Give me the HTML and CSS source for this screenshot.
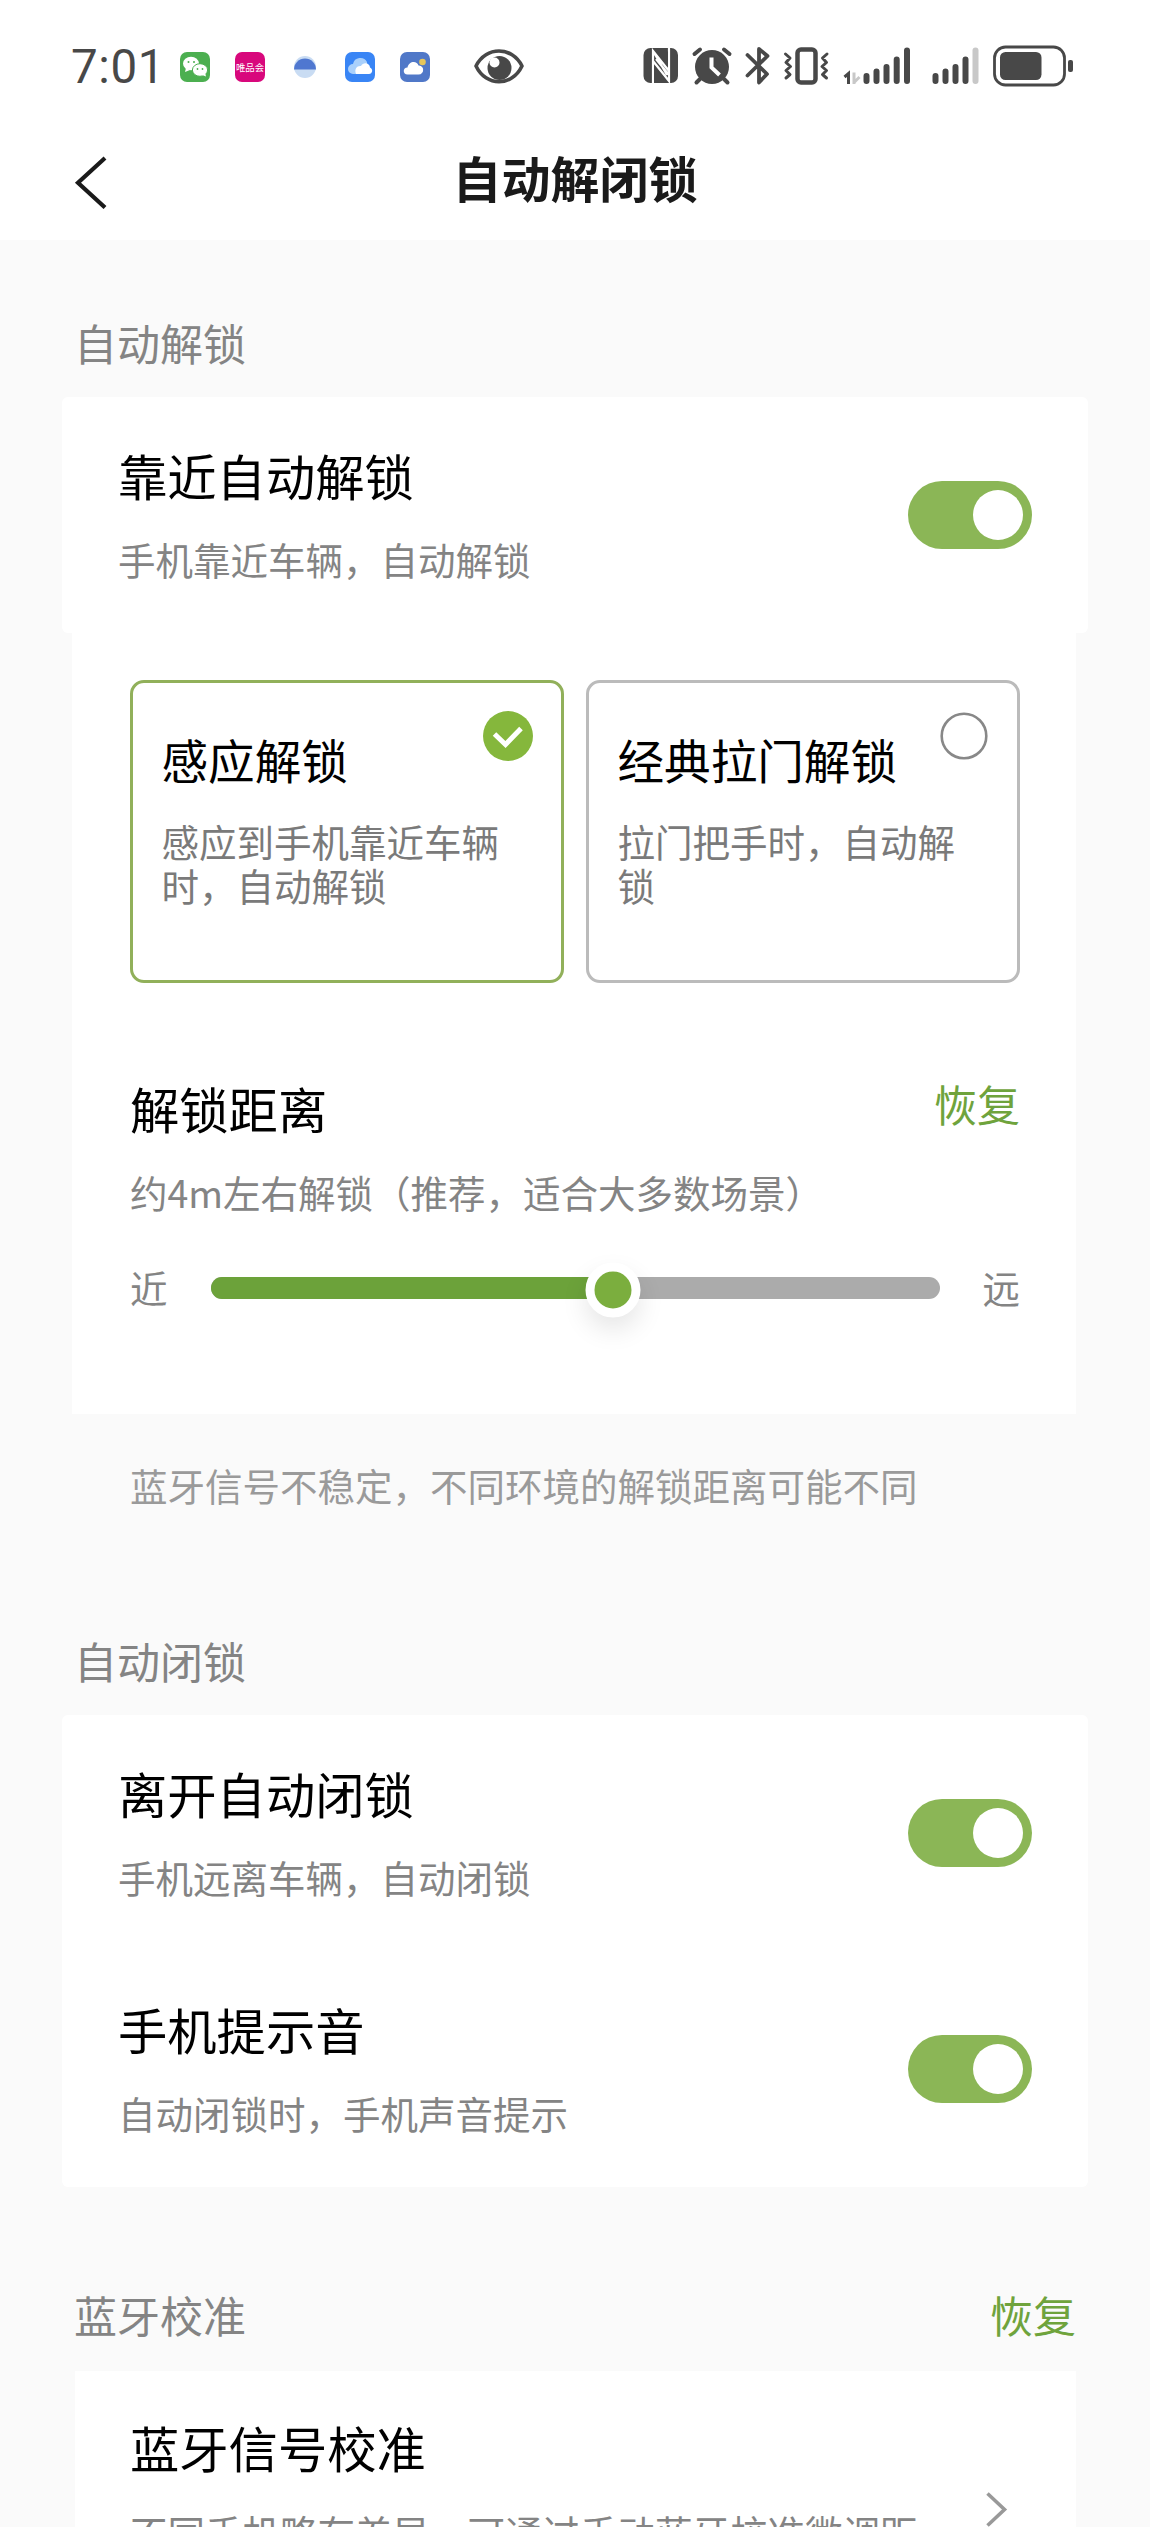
FILE: index.html
```html
<!DOCTYPE html>
<html lang="zh-CN">
<head>
<meta charset="utf-8">
<title>自动解闭锁</title>
<link rel="stylesheet" href="styles.css">
</head>
<body>
<div class="screen">
  <header class="top">
    <div class="status">
      <div class="status-group">
        <span class="clock">7:01</span>
        <svg width="51" height="44" viewBox="172 44 51 44">
          <rect x="180" y="52" width="30" height="30" rx="7" fill="#4caf50"/>
          <ellipse cx="191" cy="63.500" rx="8" ry="6.800" fill="#fff"/>
          <path d="M186 68l-1 4 5-2z" fill="#fff"/>
          <ellipse cx="200" cy="70" rx="7.600" ry="6.300" fill="#fff" stroke="#4caf50" stroke-width="1"/>
          <path d="M202 75l4 1.500-1-4z" fill="#fff"/>
          <g fill="#4caf50"><circle cx="188.500" cy="62" r="1"/><circle cx="194" cy="62" r="1"/><circle cx="197.500" cy="69" r=".9"/><circle cx="202.500" cy="69" r=".9"/></g>
        </svg>
        <svg width="55" height="44" viewBox="223 44 55 44">
          <rect x="235" y="52" width="30" height="30" rx="7" fill="#d8087c"/>
          <text x="250" y="70.500" text-anchor="middle" class="vip">唯品会</text>
        </svg>
        <svg width="55" height="44" viewBox="278 44 55 44">
          <circle cx="305" cy="67" r="11" fill="#c9dcf3"/>
          <path d="M294 69.500a11 11 0 1 1 22 0z" fill="#4f77d0"/>
        </svg>
        <svg width="55" height="44" viewBox="333 44 55 44">
          <rect x="345" y="52" width="30" height="30" rx="7" fill="#3985f5"/>
          <path d="M353 74a5 5 0 0 1 0-10 7.500 7.500 0 0 1 14-2v12z" fill="#a9d0fb"/>
          <path d="M356 74c-2-5 1-8.500 5-8 2-4.500 9-3.500 9 1.500 3.500 1.500 2.500 6.500-1 6.500z" fill="#fff"/>
        </svg>
        <svg width="55" height="44" viewBox="388 44 55 44">
          <rect x="400" y="52" width="30" height="30" rx="7" fill="#5078c8"/>
          <circle cx="422.500" cy="62" r="3.300" fill="#e6c65b"/>
          <path d="M407.500 74.500c-5 0-5-7 0-7 1-6.500 9.500-7.500 11-2 6-.5 6.500 9 0 9z" fill="#fff"/>
        </svg>
        <svg width="90" height="44" viewBox="443 44 90 44">
          <path d="M476 66C486 46 512 46 522 66 512 87 486 87 476 66z" fill="none" stroke="#484848" stroke-width="3.600" stroke-linejoin="round"/>
          <circle cx="499.500" cy="68" r="12" fill="#484848"/>
          <circle cx="494.500" cy="62.500" r="5" fill="#fff"/>
        </svg>
      </div>
      <div class="status-group">
        <svg width="50" height="44" viewBox="636 44 50 44">
          <rect x="643.500" y="48" width="34.500" height="35" rx="7" fill="#484848"/>
          <path d="M653 84V51L669 71M669 48v33L653 61M656 59l13 16M653 51l14 24" fill="none" stroke="#fff" stroke-width="2.200"/>
          <path d="M656 49h9l3 3v15L656 52zM654 65l12 15v3h-12z" fill="#484848"/>
        </svg>
        <svg width="52" height="44" viewBox="686 44 52 44">
          <circle cx="712" cy="67" r="17" fill="#484848"/>
          <path d="M694.500 54l5.500-4.500M729.500 54l-5.500-4.500M700 79l-3.500 3.500M724 79l3.500 3.500" stroke="#484848" stroke-width="4" stroke-linecap="round"/>
          <path d="M711.500 57.500v10l8 7.500" fill="none" stroke="#fff" stroke-width="4"/>
        </svg>
        <svg width="40" height="44" viewBox="738 44 40 44">
          <path d="M747.500 55l19.500 19-8 8.500V49l8.500 7-20 19.500" fill="none" stroke="#484848" stroke-width="3.800" stroke-linecap="round" stroke-linejoin="round"/>
        </svg>
        <svg width="58" height="44" viewBox="778 44 58 44">
          <rect x="797.500" y="49.500" width="18" height="33" rx="3.500" fill="none" stroke="#484848" stroke-width="4.500"/>
          <path d="M785.500 54l4.500 4-4 4.500 4.500 4-4.500 4 4 4-4 3.500M827 54l-4.500 4 4 4.500-4.500 4 4.500 4-4 4 4 3.500" fill="none" stroke="#484848" stroke-width="3" stroke-linecap="round" stroke-linejoin="round"/>
        </svg>
        <svg width="84" height="44" viewBox="836 44 84 44">
          <path d="M844.500 77l4-3.500V84" fill="none" stroke="#484848" stroke-width="3"/>
          <path d="M854 72.500v11.500M854.500 82l5-5" fill="none" stroke="#c8c8c8" stroke-width="3"/>
          <path d="M866.500 76v5M876.500 71.500v9.500M886.500 67v14M896.700 59.500v21.500M907 50.500v30.500" stroke="#484848" stroke-width="6" stroke-linecap="round"/>
        </svg>
        <svg width="66" height="44" viewBox="920 44 66 44">
          <path d="M935.500 76v5M945.500 71.500v9.500M955.500 67v14M965.500 59.500v21.500" stroke="#484848" stroke-width="6" stroke-linecap="round"/>
          <path d="M975.500 50.500v30.500" stroke="#c8c8c8" stroke-width="6" stroke-linecap="round"/>
        </svg>
        <svg width="90" height="44" viewBox="986 44 90 44">
          <rect x="994.500" y="47" width="70" height="38" rx="11" fill="none" stroke="#484848" stroke-width="2.800"/>
          <rect x="1000" y="52" width="41.500" height="28" rx="5.500" fill="#484848"/>
          <rect x="1068" y="60" width="5" height="12" rx="2" fill="#484848"/>
        </svg>
      </div>
    </div>
    <nav class="nav">
      <svg class="back" width="48" height="64" viewBox="68 144.5 48 64">
        <path d="M105 157.500L78 182.300 105 207" transform="translate(0 0)" fill="none" stroke="#1a1a1a" stroke-width="4.200"/>
      </svg>
      <h1 class="title">自动解闭锁</h1>
    </nav>
  </header>

  <main class="content">
    <h2 class="label">自动解锁</h2>
    <section class="card">
      <div class="row">
        <div class="row-text">
          <div class="name">靠近自动解锁</div>
          <div class="desc">手机靠近车辆，自动解锁</div>
        </div>
        <div class="toggle"><div class="knob"></div></div>
      </div>
    </section>

    <section class="panel">
      <div class="options">
        <div class="option selected">
          <div class="option-name">感应解锁</div>
          <div class="option-desc">感应到手机靠近车辆时，自动解锁</div>
          <svg class="radio" width="50" height="50" viewBox="0 0 50 50">
            <circle cx="25" cy="25" r="25" fill="#85b73c"/>
            <path d="M11.500 23L22.500 33.500 38 17.500" fill="none" stroke="#fff" stroke-width="5"/>
          </svg>
        </div>
        <div class="option">
          <div class="option-name">经典拉门解锁</div>
          <div class="option-desc">拉门把手时，自动解锁</div>
          <svg class="radio" width="50" height="50" viewBox="0 0 50 50">
            <circle cx="25" cy="25" r="22.300" fill="none" stroke="#888" stroke-width="2.600"/>
          </svg>
        </div>
      </div>
      <div class="distance-head">
        <div class="name">解锁距离</div>
        <div class="reset">恢复</div>
      </div>
      <div class="desc distance-desc">约4m左右解锁（推荐，适合大多数场景）</div>
      <div class="slider">
        <span class="slider-end">近</span>
        <div class="track">
          <div class="fill" style="width:55.2%"></div>
          <div class="thumb" style="left:55.2%"></div>
        </div>
        <span class="slider-end">远</span>
      </div>
    </section>
    <p class="note">蓝牙信号不稳定，不同环境的解锁距离可能不同</p>

    <h2 class="label">自动闭锁</h2>
    <section class="card">
      <div class="row">
        <div class="row-text">
          <div class="name">离开自动闭锁</div>
          <div class="desc">手机远离车辆，自动闭锁</div>
        </div>
        <div class="toggle"><div class="knob"></div></div>
      </div>
      <div class="row">
        <div class="row-text">
          <div class="name">手机提示音</div>
          <div class="desc">自动闭锁时，手机声音提示</div>
        </div>
        <div class="toggle"><div class="knob"></div></div>
      </div>
    </section>

    <div class="calibrate-head">
      <h2 class="label">蓝牙校准</h2>
      <div class="reset">恢复</div>
    </div>
    <section class="calibrate">
      <div class="row-text">
        <div class="name">蓝牙信号校准</div>
        <div class="desc">不同手机略有差异，可通过手动蓝牙校准微调距</div>
      </div>
      <svg class="chevron" width="24" height="38" viewBox="984 2490 24 38">
        <path d="M987.500 2493.500L1004.500 2509.500 987.500 2525.500" fill="none" stroke="#999" stroke-width="3.600"/>
      </svg>
    </section>
  </main>
</div>
</body>
</html>
```

FILE: styles.css
```css
* {
  box-sizing: border-box;
  margin: 0;
  padding: 0;
}

body {
  background: #fafafa;
  font-family: "Noto Sans CJK SC", sans-serif;
  color: #000;
}

svg {
  display: block;
  flex: none;
}

.screen {
  width: 1150px;
  height: 2527px;
  overflow: hidden;
  display: flex;
  flex-direction: column;
}

.top {
  flex: none;
  height: 240px;
  padding-top: 44px;
  background: #fff;
}

.status {
  display: flex;
  justify-content: space-between;
  height: 44px;
  padding: 0 74px 0 71px;
}

.status-group {
  display: flex;
}

.clock {
  width: 101px;
  font-family: Roboto, sans-serif;
  font-size: 47.5px;
  line-height: 46px;
  letter-spacing: 0.6px;
  color: #484848;
}

.vip {
  font-size: 9.4px;
  fill: #fff;
}

.nav {
  display: grid;
  grid-template-columns: 68px 1fr 68px;
  align-items: center;
  height: 152px;
  padding-top: 25px;
}

.back {
  grid-column: 1;
  margin-left: 68px;
}

.title {
  grid-column: 2;
  text-align: center;
  font-size: 49px;
  line-height: 60px;
  font-weight: 700;
  color: #1a1a1a;
}

.content {
  flex: 1;
  min-height: 0;
  padding: 72px 62px 0;
}

.label {
  padding-left: 12px;
  font-size: 43px;
  line-height: 60px;
  font-weight: 400;
  color: #848484;
}

.card {
  margin-top: 25px;
  background: #fff;
  border-radius: 6px;
}

.row {
  display: flex;
  align-items: center;
  justify-content: space-between;
  height: 236px;
  padding: 0 56px;
}

.row-text {
  display: flex;
  flex-direction: column;
  gap: 32px;
  white-space: nowrap;
}

.row .row-text {
  padding-bottom: 4px;
}

.name {
  font-size: 49.3px;
  line-height: 60px;
}

.desc {
  font-size: 37.5px;
  line-height: 44px;
  color: #848484;
}

.toggle {
  display: flex;
  align-items: center;
  justify-content: flex-end;
  width: 124px;
  height: 68px;
  padding-right: 9px;
  border-radius: 34px;
  background: #8bb656;
}

.knob {
  width: 50px;
  height: 50px;
  border-radius: 50%;
  background: #fff;
}

.panel {
  height: 781px;
  margin: 0 12px 0 10px;
  padding: 47px 56px 0 58px;
  background: #fff;
}

.options {
  display: grid;
  grid-template-columns: 1fr 1fr;
  gap: 22px;
}

.option {
  position: relative;
  height: 303px;
  padding: 48px 28px 0 28.5px;
  border: 2.6px solid #bbb;
  border-width: 3px;
  border-radius: 14px;
}

.option.selected {
  border-color: #91b05a;
}

.option-name {
  font-size: 46.6px;
  line-height: 56px;
}

.option-desc {
  margin-top: 32px;
  font-size: 37.5px;
  line-height: 44px;
  color: #7a7a7a;
}

.radio {
  position: absolute;
  top: 28px;
  right: 28px;
}

.distance-head {
  display: flex;
  justify-content: space-between;
  align-items: flex-start;
  margin-top: 95px;
}

.reset {
  font-size: 43px;
  line-height: 51px;
  color: #6fa33c;
}

.distance-desc {
  margin-top: 32px;
}

.slider {
  display: flex;
  align-items: center;
  gap: 43px;
  height: 44px;
  margin-top: 52px;
}

.slider-end {
  align-self: flex-start;
  font-size: 37.5px;
  line-height: 42px;
  color: #848484;
}

.track {
  position: relative;
  flex: 1;
  height: 22px;
  border-radius: 11px;
  background: #ababab;
}

.fill {
  height: 100%;
  border-radius: 11px 0 0 11px;
  background: #6ca23a;
}

.thumb {
  position: absolute;
  top: 12.5px;
  width: 55px;
  height: 55px;
  border: 9px solid #fff;
  border-radius: 50%;
  background: #7bae3e;
  box-shadow: 0 12px 26px rgba(0, 0, 0, 0.1);
  transform: translate(-50%, -50%);
}

.note {
  margin: 49px 0 123px 68px;
  font-size: 37.5px;
  line-height: 44px;
  color: #9a9a9a;
}

.calibrate-head {
  display: flex;
  align-items: center;
  justify-content: space-between;
  margin-top: 97px;
  padding-right: 12px;
}

.calibrate {
  display: flex;
  justify-content: space-between;
  align-items: flex-start;
  height: 200px;
  margin: 27px 12px 0 13px;
  padding: 46px 68px 0 55px;
  background: #fff;
}

.calibrate .row-text {
  gap: 33px;
}

.chevron {
  margin-top: 73px;
}
```
